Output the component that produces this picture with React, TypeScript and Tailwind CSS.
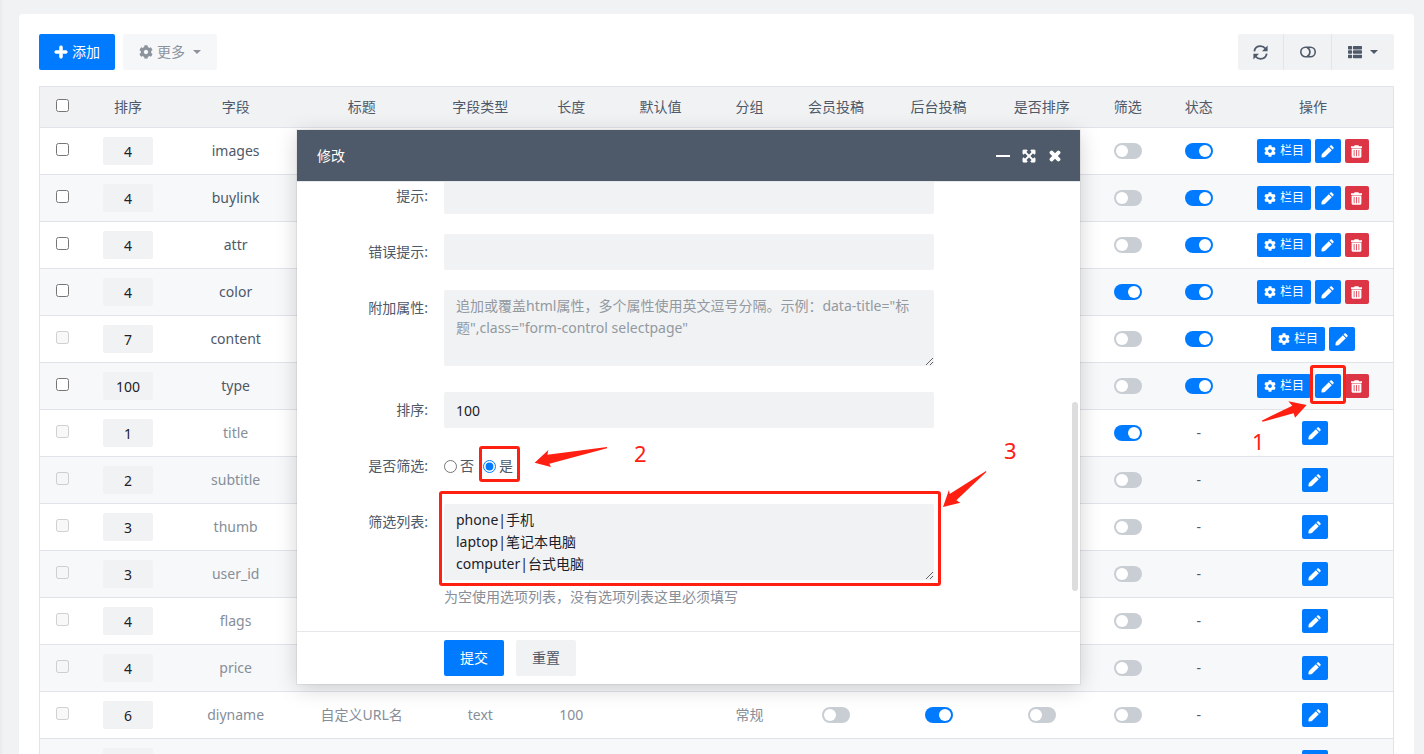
import { ReactNode } from "react";
import clsx from "clsx";
import { FaCog, FaExpandArrowsAlt, FaPlus, FaThList, FaTimes } from "react-icons/fa";

type Field = {
  name: string;
  sort: number;
  locked?: boolean; // system field, can't be selected
  muted?: boolean;
  title?: string;
  type?: string;
  length?: number;
  group?: string;
  contribute?: boolean;
  backend?: boolean;
  sortable?: boolean;
  filter: boolean;
  status?: boolean;
  actions: string[];
};

const ALL_ACTIONS = ["column", "edit", "delete"];

const FIELDS: Field[] = [
  { name: "images", sort: 4, filter: false, status: true, actions: ALL_ACTIONS },
  { name: "buylink", sort: 4, filter: false, status: true, actions: ALL_ACTIONS },
  { name: "attr", sort: 4, filter: false, status: true, actions: ALL_ACTIONS },
  { name: "color", sort: 4, filter: true, status: true, actions: ALL_ACTIONS },
  {
    name: "content",
    sort: 7,
    locked: true,
    filter: false,
    status: true,
    actions: ["column", "edit"],
  },
  { name: "type", sort: 100, filter: false, status: true, actions: ALL_ACTIONS },
  { name: "title", sort: 1, locked: true, muted: true, filter: true, actions: ["edit"] },
  { name: "subtitle", sort: 2, locked: true, muted: true, filter: false, actions: ["edit"] },
  { name: "thumb", sort: 3, locked: true, muted: true, filter: false, actions: ["edit"] },
  { name: "user_id", sort: 3, locked: true, muted: true, filter: false, actions: ["edit"] },
  { name: "flags", sort: 4, locked: true, muted: true, filter: false, actions: ["edit"] },
  { name: "price", sort: 4, locked: true, muted: true, filter: false, actions: ["edit"] },
  {
    name: "diyname",
    sort: 6,
    locked: true,
    muted: true,
    title: "自定义URL名",
    type: "text",
    length: 100,
    group: "常规",
    contribute: false,
    backend: true,
    sortable: false,
    filter: false,
    actions: ["edit"],
  },
  { name: "keywords", sort: 7, locked: true, muted: true, filter: false, actions: ["edit"] },
];

const COLUMNS = [
  { label: "排序", width: "w-[86px]" },
  { label: "字段", width: "w-[129px]" },
  { label: "标题", width: "w-[123px]" },
  { label: "字段类型", width: "w-[114px]" },
  { label: "长度", width: "w-[68px]" },
  { label: "默认值", width: "w-[110px]" },
  { label: "分组", width: "w-[68px]" },
  { label: "会员投稿", width: "w-[105px]" },
  { label: "后台投稿", width: "w-[100px]" },
  { label: "是否排序", width: "w-[106px]" },
  { label: "筛选", width: "w-[66px]" },
  { label: "状态", width: "w-[76px]" },
  { label: "操作", width: "w-[156px] pr-1" },
];

const CaretIcon = ({ className }: { className?: string }) => (
  <svg className={clsx("h-1 w-2", className)} viewBox="0 0 8 4" fill="currentColor">
    <path d="M0 0h8L4 4z" />
  </svg>
);

const RefreshIcon = () => (
  <svg className="size-[15px]" viewBox="0 0 15 15" fill="none" stroke="currentColor" strokeWidth="1.8">
    <path d="M1.3 6.4C1.8 3.3 4.3 1.2 7.5 1.2c2 0 3.7.8 4.9 2.3M13.7 8.6c-.5 3.1-3 5.2-6.2 5.2-2 0-3.7-.8-4.9-2.3" />
    <path d="M14.6.6v5.6H9zM.4 14.4V8.8H6z" fill="currentColor" stroke="none" />
  </svg>
);

const ToggleIcon = () => (
  <svg className="h-3 w-4" viewBox="0 0 16 12" fill="none" stroke="currentColor" strokeWidth="1.6">
    <rect x="0.8" y="1.2" width="14.4" height="9.6" rx="4.8" />
    <path d="M7 1.4C8.9 2.2 9.9 4 9.9 6S8.9 9.8 7 10.6" />
  </svg>
);

const PencilIcon = () => (
  <svg className="size-[13px]" viewBox="0 0 13 13" fill="currentColor">
    <path d="M7.8 2.2l3 3-6.6 6.6c-.3.3-.6.4-1 .5l-2 .3c-.5.1-.9-.3-.8-.8l.3-2c.1-.4.2-.7.5-1z" />
    <path d="M8.5 1.5l.8-.8c.5-.5 1.2-.5 1.7 0l1.3 1.3c.5.5.5 1.2 0 1.7l-.8.8z" />
  </svg>
);

const TrashIcon = () => (
  <svg className="size-[13px]" viewBox="0 0 13 13" fill="currentColor">
    <path d="M4.6.3h3.8l.6 1h3v1.6H1V1.300h3z" />
    <path
      fillRule="evenodd"
      d="M1.600 3.500h9.800v8.100a1.100 1.100 0 0 1-1.100 1.100H2.700a1.100 1.100 0 0 1-1.100-1.100zM3.700 5v6.200h.8V5zM6.100 5v6.200h.8V5zM8.500 5v6.200h.8V5z"
    />
  </svg>
);

const Switch = ({ label, checked }: { label: string; checked?: boolean }) => {
  if (checked === undefined) return null;
  return (
    <input
      type="checkbox"
      role="switch"
      aria-label={label}
      defaultChecked={checked}
      className="block mx-auto h-4 w-7 appearance-none rounded-full bg-[#c9cdd4] p-0.5 before:block before:size-3 before:rounded-full before:bg-white checked:bg-[#007bff] checked:before:ml-3"
    />
  );
};

type ArrowProps = { className: string; viewBox: string; points: string };

const Arrow = ({ className, viewBox, points }: ArrowProps) => (
  <svg className={clsx("absolute", className)} viewBox={viewBox} fill="#ff2012">
    <polygon points={points} />
  </svg>
);

const Digit = ({ className, children }: { className: string; children: ReactNode }) => (
  <span className={clsx("absolute text-[22px] leading-7 text-[#ff2012]", className)}>
    {children}
  </span>
);

const RowActions = ({ field }: { field: Field }) => (
  <div
    className={clsx(
      "flex justify-center gap-1 text-xs text-white",
      field.actions.length > 1 && "pr-1"
    )}
  >
    {field.actions.includes("column") && (
      <button
        type="button"
        className="flex h-6 items-center gap-1 rounded-xs bg-[#007bff] px-[7px]"
      >
        <FaCog className="size-3" />
        栏目
      </button>
    )}
    <span className="relative">
      <button
        type="button"
        aria-label="编辑"
        className="flex h-6 w-[26px] items-center justify-center rounded-xs bg-[#007bff]"
      >
        <PencilIcon />
      </button>
      {field.name === "type" && (
        <>
          <span className="absolute -inset-x-[5px] -top-[9px] -bottom-[6px] z-10 rounded-[3px] border-3 border-[#ff2012]" />
          <Arrow
            className="-left-[55px] top-[26px] h-[22px] w-[48px] z-10"
            viewBox="540 268 144 66"
            points="545,330 637,285 625,272 680,283 645,321 641,308 548,333"
          />
          <Digit className="-left-[63px] top-[53px]">1</Digit>
        </>
      )}
    </span>
    {field.actions.includes("delete") && (
      <button
        type="button"
        aria-label="删除"
        className="flex size-6 items-center justify-center rounded-xs bg-[#dc3545]"
      >
        <TrashIcon />
      </button>
    )}
  </div>
);

const Toolbar = () => (
  <div className="flex items-center gap-2">
    <button
      type="button"
      className="flex h-9 items-center gap-1 rounded-xs bg-[#007bff] px-[15px] text-white"
    >
      <FaPlus className="size-[14px]" strokeWidth="30" stroke="currentColor" />
      添加
    </button>
    <button
      type="button"
      className="flex h-9 items-center gap-1 rounded-xs bg-[#f6f7f9] px-4 text-[#8c939c]"
    >
      <FaCog className="size-[14px]" />
      更多
      <CaretIcon className="ml-1" />
    </button>

    <div className="ml-auto flex h-9 divide-x divide-[#e2e5ea] overflow-hidden rounded-xs bg-[#f1f2f4] text-[#4e5969]">
      <button type="button" aria-label="刷新" className="flex w-[46px] items-center justify-center">
        <RefreshIcon />
      </button>
      <button type="button" aria-label="切换" className="flex w-[48px] items-center justify-center">
        <ToggleIcon />
      </button>
      <button type="button" aria-label="列" className="flex w-[62px] items-center justify-center gap-2">
        <FaThList className="size-[14px]" />
        <CaretIcon />
      </button>
    </div>
  </div>
);

const FieldTable = () => (
  <table className="mt-4 w-full table-fixed border-separate border-spacing-0 border border-b-0 border-[#e1e3ea] text-center">
    <thead className="bg-[#f1f2f4]">
      <tr className="h-[41px]">
        <th className="w-[45px] border-b border-[#e1e3ea] pb-[3px]">
          <input type="checkbox" aria-label="全选" className="block mx-auto size-[13px]" />
        </th>
        {COLUMNS.map((column) => (
          <th
            key={column.label}
            className={clsx("border-b border-[#e1e3ea] font-normal", column.width)}
          >
            {column.label}
          </th>
        ))}
      </tr>
    </thead>
    <tbody className="[&>*:nth-child(even)]:bg-[#f7f8fa] [&>*>td]:border-b [&>*>td]:border-[#e1e3ea]">
      {FIELDS.map((field) => (
        <tr
          key={field.name}
          className={clsx("h-[47px] leading-4", field.muted && "text-[#868e99]")}
        >
          <td className="pb-[3px]">
            <input
              type="checkbox"
              aria-label={field.name}
              disabled={field.locked}
              className="block mx-auto size-[13px]"
            />
          </td>
          <td>
            <input
              type="text"
              aria-label={`${field.name} 排序`}
              defaultValue={field.sort}
              className="block mx-auto h-7 w-[50px] rounded-xs bg-[#f1f2f4] text-center text-[#1d2129]"
            />
          </td>
          <td>{field.name}</td>
          <td>{field.title}</td>
          <td>{field.type}</td>
          <td>{field.length}</td>
          <td></td>
          <td>{field.group}</td>
          <td>
            <Switch label="会员投稿" checked={field.contribute} />
          </td>
          <td>
            <Switch label="后台投稿" checked={field.backend} />
          </td>
          <td>
            <Switch label="是否排序" checked={field.sortable} />
          </td>
          <td>
            <Switch label="筛选" checked={field.filter} />
          </td>
          <td className="text-[#4e5969]">
            {field.status === undefined ? "-" : <Switch label="状态" checked={field.status} />}
          </td>
          <td>
            <RowActions field={field} />
          </td>
        </tr>
      ))}
    </tbody>
  </table>
);

type FormRowProps = { label: string; htmlFor?: string; children: ReactNode };

const FormRow = ({ label, htmlFor, children }: FormRowProps) => (
  <div className="flex shrink-0 gap-4">
    <label htmlFor={htmlFor} className="w-[131px] shrink-0 text-right leading-9">
      {label}:
    </label>
    <div className="w-[490px]">{children}</div>
  </div>
);

const controlStyle = "block w-full rounded-xs bg-[#f1f2f4] px-3 text-[#1d2129]";

const EditDialog = () => (
  <section
    role="dialog"
    aria-label="修改"
    className="absolute left-[297px] top-[130px] z-20 w-[783px] bg-white shadow-[0_4px_20px_rgba(0,0,0,0.18),0_0_0_1px_rgba(0,0,0,0.05)]"
  >
    <header className="flex h-[51px] items-center bg-[#4e5a6a] pl-5 pr-[18px] text-white">
      <h2>修改</h2>
      <div className="ml-auto flex items-center gap-3">
        <button type="button" aria-label="最小化" className="flex h-4 w-[14px] items-center">
          <span className="h-0.5 w-full bg-white" />
        </button>
        <button type="button" aria-label="最大化">
          <FaExpandArrowsAlt className="size-[14px]" strokeWidth="24" stroke="currentColor" />
        </button>
        <button type="button" aria-label="关闭">
          <FaTimes className="size-[14px] overflow-visible" strokeWidth="50" stroke="currentColor" />
        </button>
      </div>
    </header>

    <form>
      <div className="relative flex h-[450px] flex-col justify-end gap-5 overflow-hidden border-t border-[#e5e7eb] pb-[23px]">
        <FormRow label="提示" htmlFor="tip">
          <input id="tip" type="text" className={clsx(controlStyle, "h-9")} />
        </FormRow>
        <FormRow label="错误提示" htmlFor="error-tip">
          <input id="error-tip" type="text" className={clsx(controlStyle, "h-9")} />
        </FormRow>
        <FormRow label="附加属性" htmlFor="extend">
          <textarea
            id="extend"
            className={clsx(controlStyle, "mb-[6px] h-[76px] resize py-[5px] leading-[22px] placeholder:text-[#9299a1]")}
            placeholder={
              '追加或覆盖html属性，多个属性使用英文逗号分隔。示例：data-title="标题",class="form-control selectpage"'
            }
          />
        </FormRow>
        <FormRow label="排序" htmlFor="weigh">
          <input id="weigh" type="text" defaultValue="100" className={clsx(controlStyle, "h-9")} />
        </FormRow>
        <FormRow label="是否筛选">
          <div className="flex h-9 items-center gap-[9px]">
            <label className="flex items-center gap-[3px]">
              <input type="radio" name="isfilter" className="size-[13px]" />否
            </label>
            <label className="relative flex items-center gap-[3px]">
              <input
                type="radio"
                name="isfilter"
                defaultChecked
                className="size-[13px] accent-[#007bff]"
              />
              是
              <span className="absolute -left-1 -right-[7px] -top-[10px] -bottom-[6px] rounded-[3px] border-3 border-[#ff2012]" />
            </label>
          </div>
        </FormRow>
        <FormRow label="筛选列表" htmlFor="filterlist">
          <div className="relative">
            <textarea
              id="filterlist"
              className={clsx(controlStyle, "h-[76px] resize overflow-hidden py-[5px] leading-[22px]")}
              defaultValue={"phone|手机\nlaptop|笔记本电脑\ncomputer|台式电脑"}
            />
            <span className="pointer-events-none absolute -left-[5px] -right-[7px] -top-[13px] -bottom-[6px] rounded-[3px] border-3 border-[#ff2012]" />
          </div>
          <p className="mt-[6px] leading-[22px] text-[#868e99]">
            为空使用选项列表，没有选项列表这里必须填写
          </p>
        </FormRow>

        <span className="absolute right-0.5 top-[220px] h-[189px] w-[6px] rounded-full bg-[#dddddd]" />
        <Arrow
          className="left-[237px] top-[264px] h-[22px] w-[74px]"
          viewBox="522 201 222 66"
          points="741,204 562,227 565,213 524,251 573,264 568,254 741,208"
        />
        <Digit className="left-[337px] top-[257px]">2</Digit>
        <Arrow
          className="left-[645px] top-[288px] h-[38px] w-[46px]"
          viewBox="725 270 138 114"
          points="857,273 748,342 746,329 728,381 780,368 768,361 858,276"
        />
        <Digit className="left-[707px] top-[254px]">3</Digit>
      </div>

      <footer className="flex gap-3 border-t border-[#e5e7eb] py-2 pl-[147px]">
        <button type="submit" className="h-9 w-[60px] rounded-xs bg-[#007bff] text-white">
          提交
        </button>
        <button type="reset" className="h-9 w-[60px] rounded-xs bg-[#f1f2f4]">
          重置
        </button>
      </footer>
    </form>
  </section>
);

export default function App() {
  return (
    <div className="relative h-screen overflow-hidden bg-[#f1f2f4] pl-[19px] pr-[10px] pt-[14px] font-['Noto_Sans','Noto_Sans_CJK_SC',sans-serif] text-sm text-[#4e5969]">
      <span className="absolute inset-y-0 left-0 w-1 bg-linear-to-r from-[#e8eaec] to-[#f1f2f4]" />
      <main className="min-h-full rounded-sm bg-white p-5">
        <Toolbar />
        <FieldTable />
      </main>
      <EditDialog />
    </div>
  );
}
